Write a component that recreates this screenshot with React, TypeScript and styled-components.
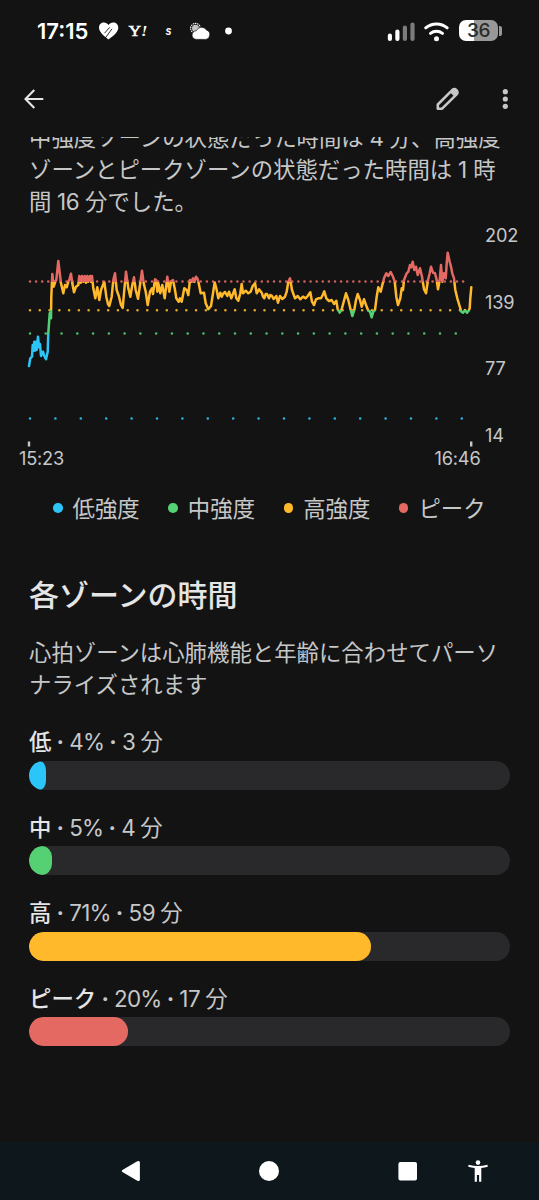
import React from "react";
import styled, { createGlobalStyle } from "styled-components";

const color = {
  bg: "#131314",
  text: "#c6c7c7",
  strong: "#e5e5e5",
  track: "#29292b",
  low: "#2cc5f8",
  mid: "#55d072",
  high: "#ffb92b",
  peak: "#e46962",
};

const GlobalStyle = createGlobalStyle`
  * { box-sizing: border-box; }
  body {
    margin: 0;
    background: ${color.bg};
    font-family: Inter, "Noto Sans CJK JP", sans-serif;
    overflow: hidden;
  }
  h2, p { margin: 0; }
`;

const Screen = styled.div`
  width: 539px;
  height: 1200px;
  display: flex;
  flex-direction: column;
  background: ${color.bg};
  color: ${color.text};
`;

const StatusBar = styled.header`
  height: 61px;
  flex: none;
  display: flex;
  align-items: center;
  justify-content: space-between;
  padding: 0 37px 0 37px;
  color: #fff;
`;

const StatusGroup = styled.div`
  display: flex;
  align-items: center;
`;

const Clock = styled.span`
  width: 61px;
  font-size: 22px;
  line-height: 28px;
  font-weight: 600;
  letter-spacing: 0;
  white-space: nowrap;
`;

const Battery = styled.div`
  display: flex;
  align-items: center;
  gap: 1px;
  margin-left: 9px;
`;

const BatteryBody = styled.div`
  width: 39px;
  height: 21px;
  border-radius: 7px;
  background: linear-gradient(90deg, #fff 38%, #989898 38%);
  color: #2b2b2b;
  font-size: 19px;
  line-height: 21px;
  font-weight: 500;
  letter-spacing: -0.5px;
  text-align: center;
`;

const BatteryTip = styled.div`
  width: 3px;
  height: 10px;
  border-radius: 0 2px 2px 0;
  background: #989898;
`;

const AppBar = styled.div`
  height: 76px;
  flex: none;
  display: flex;
  align-items: center;
  padding: 0 21px 0 22px;
`;

const IconButton = styled.button<{ $push?: boolean; $gap?: number }>`
  display: flex;
  padding: 0;
  border: 0;
  background: none;
  margin-left: ${(p) => (p.$push ? "auto" : `${p.$gap ?? 0}px`)};
`;

const Content = styled.main`
  flex: 1;
  min-height: 0;
  overflow: hidden;
  display: flex;
  flex-direction: column;
`;

const Summary = styled.p`
  margin: -15.4px 29px 0;
  font-size: 22.4px;
  line-height: 32.4px;
  white-space: nowrap;
  word-spacing: -0.6px;
`;

const Num = styled.span<{ $track?: number }>`
  letter-spacing: ${(p) => p.$track ?? 0}px;
`;

const ChartCard = styled.section`
  display: grid;
  grid-template-columns: 485px 54px;
  height: 251px;
  margin-top: 4.9px;
  flex: none;
`;

const Plot = styled.div`
  display: flex;
  flex-direction: column;
`;

const AxisLabel = styled.span`
  font-size: 18.2px;
  line-height: 22px;
  letter-spacing: -0.2px;
`;

const TimeAxis = styled.div`
  display: flex;
  justify-content: space-between;
  padding: 0 4.5px 0 19px;
`;

const ValueAxis = styled.div`
  height: 222px;
  padding-top: 0.4px;
  display: flex;
  flex-direction: column;
  justify-content: space-between;
`;

const Legend = styled.div`
  display: flex;
  height: 32px;
  align-items: center;
  padding-left: 53px;
  gap: 28.5px;
  flex: none;
  margin-top: 18px;
`;

const LegendItem = styled.div`
  display: flex;
  align-items: center;
  gap: 10px;
  font-size: 22.4px;
  line-height: 32px;
`;

const Dot = styled.span<{ $color: string }>`
  width: 9.6px;
  height: 9.6px;
  border-radius: 50%;
  background: ${(p) => p.$color};
  margin-top: -2px;
`;

const Title = styled.h2`
  margin: 48.5px 29px 0;
  font-size: 30px;
  line-height: 44px;
  font-weight: 500;
  color: ${color.strong};
`;

const Description = styled.p`
  margin: 20px 29px 0;
  font-size: 22.4px;
  line-height: 32.2px;
`;

const Zones = styled.div`
  margin: 24.4px 29px 0;
  display: flex;
  flex-direction: column;
  gap: 22px;
`;

const Zone = styled.div`
  height: 63.5px;
  display: flex;
  flex-direction: column;
  justify-content: space-between;
`;

const ZoneLabel = styled.div`
  font-size: 22.4px;
  line-height: 32px;
  white-space: pre;
  word-spacing: -1.1px;
`;

const ZoneName = styled.span`
  color: ${color.strong};
  font-weight: 500;
`;

const Separator = styled.span`
  font-weight: 700;
`;

const Track = styled.div`
  height: 28.6px;
  border-radius: 14.3px;
  background: ${color.track};
  overflow: hidden;
`;

const Fill = styled.div<{ $color: string; $width: number; $radius: string }>`
  height: 100%;
  width: ${(p) => p.$width}px;
  background: ${(p) => p.$color};
  border-radius: ${(p) => p.$radius};
`;

const NavBar = styled.nav`
  height: 58px;
  flex: none;
  display: flex;
  align-items: center;
  padding: 0 50px 0 120px;
  background: #0d171c;
`;

const NavItem = styled.div<{ $gap?: number }>`
  display: flex;
  margin-left: ${(p) => p.$gap ?? 0}px;
`;

/* Heart rate samples: [x, y] in thirds of a pixel, relative to the plot corner. */
const samples =
  "42,408 46,385 51,380 53,345 56,362 58,335 60,362 63,335 65,360 69,320 72,352 75,342 78,378 84,365 88,378 93,388 98,365 100,310 104,250 108,265 109,200 112,132 116,170 121,155 124,150 130,93 138,160 145,190 150,165 155,172 160,155 163,150 168,131 172,160 177,187 183,170 190,165 193,138 197,158 201,138 205,155 209,138 213,158 217,138 220,155 225,138 228,155 231,138 235,175 241,205 247,172 253,210 258,180 268,155 274,200 279,222 283,228 290,200 295,150 300,130 305,180 312,200 318,225 323,234 328,180 333,125 340,175 346,200 352,165 357,142 362,180 369,206 375,165 381,122 386,160 392,185 398,225 405,185 411,175 414,192 420,148 424,150 427,185 430,160 436,190 442,165 449,205 457,140 463,185 468,155 474,150 480,180 484,205 491,215 495,205 500,215 508,175 515,180 520,195 525,150 530,155 534,145 538,155 543,140 548,148 551,160 557,190 567,188 572,220 580,238 588,228 594,190 599,157 604,175 610,205 616,188 620,200 624,192 630,186 637,198 642,185 649,205 659,178 664,205 670,212 676,190 680,162 684,190 692,182 700,190 707,185 713,168 720,160 725,190 732,178 740,188 744,200 748,205 752,192 756,192 762,205 766,195 770,197 776,207 784,198 789,218 795,198 802,207 810,200 815,185 820,155 825,145 831,180 840,205 848,198 856,208 864,200 872,205 878,198 886,187 891,215 897,225 903,208 910,205 918,205 923,195 928,184 934,205 942,213 950,210 957,222 964,212 968,238 974,248 980,238 986,215 993,190 1000,210 1007,240 1012,258 1018,240 1023,210 1028,192 1035,210 1040,230 1047,208 1053,225 1060,242 1065,245 1070,262 1075,245 1080,240 1085,200 1090,172 1097,185 1102,165 1107,145 1114,130 1120,138 1127,126 1134,140 1139,155 1144,200 1149,225 1156,205 1160,175 1164,180 1167,150 1175,130 1180,125 1185,105 1189,112 1193,95 1198,120 1203,110 1208,135 1215,115 1221,140 1227,178 1233,190 1239,150 1244,130 1248,110 1254,128 1260,130 1265,150 1269,178 1274,150 1278,105 1282,155 1287,130 1292,145 1295,100 1298,68 1304,95 1308,110 1312,130 1317,145 1321,180 1327,205 1333,225 1339,245 1344,248 1350,240 1356,248 1361,242 1364,235 1366,205 1369,172";

const points = samples
  .split(" ")
  .map((pair) => {
    const [x, y] = pair.split(",").map(Number);
    return `${(15 + x / 3).toFixed(1)},${(y / 3 + 6).toFixed(1)}`;
  })
  .join(" ");

const guides = [
  { y: 57.5, step: 6.1, end: 467, color: color.peak },
  { y: 86.2, step: 9.77, end: 465, color: color.high },
  { y: 109.5, step: 15.77, end: 457, color: color.mid },
  { y: 194.5, step: 25.4, end: 463, color: color.low },
];

const HeartRateChart = () => (
  <svg width="485" height="223" viewBox="0 0 485 223">
    <defs>
      <linearGradient id="zones" gradientUnits="userSpaceOnUse" x1="0" y1="0" x2="0" y2="200">
        <stop offset="0.29" stopColor={color.peak} />
        <stop offset="0.29" stopColor={color.high} />
        <stop offset="0.431" stopColor={color.high} />
        <stop offset="0.431" stopColor={color.mid} />
        <stop offset="0.5475" stopColor={color.mid} />
        <stop offset="0.5475" stopColor={color.low} />
      </linearGradient>
    </defs>
    {guides.map((g) => (
      <line
        key={g.y}
        x1="30"
        x2={g.end}
        y1={g.y}
        y2={g.y}
        stroke={g.color}
        strokeWidth="2.6"
        strokeLinecap="round"
        strokeDasharray={`0 ${g.step}`}
        opacity="0.9"
      />
    ))}
    <polyline points={points} fill="none" stroke="url(#zones)" strokeWidth="2.5" strokeLinejoin="round" strokeLinecap="round" />
    <path d="M29 217.500v5M471.200 217.500v5" stroke="#c6c7c7" strokeWidth="2.400" />
  </svg>
);

const legend = [
  ["低強度", color.low],
  ["中強度", color.mid],
  ["高強度", color.high],
  ["ピーク", color.peak],
];

const zones = [
  { name: "低", pct: "4%", min: "3", color: color.low, width: 17.4, radius: "11px 6.400px 6.400px 11px / 14.3px 10px 10px 14.3px" },
  { name: "中", pct: "5%", min: "4", color: color.mid, width: 23.2, radius: "12.500px 10.500px 10.500px 12.500px / 14.3px 11px 11px 14.3px" },
  { name: "高", pct: "71%", min: "59", color: color.high, width: 342, radius: "14.3px" },
  { name: "ピーク", pct: "20%", min: "17", color: color.peak, width: 98.5, radius: "14.3px" },
];

const StatusIcons = () => (
  <svg width="140" height="28" viewBox="98 17 140 28" fill="#fff">
    <path d="M108.400 39.500C102.500 35 99 31.500 99 27.500C99 24.500 101.200 22.500 103.900 22.500C105.800 22.500 107.500 23.500 108.500 25C109.500 23.500 111.200 22.500 113.200 22.500C116.200 22.500 118.300 24.600 118.300 27.600C118.300 31.500 115 35 108.400 39.500Z" />
    <path d="M104.500 33.200L109.800 27.300M105.300 38L112 28.800" fill="none" stroke="#131314" strokeWidth="0.900" />
    <text transform="translate(128.500 36.300) scale(1.250 1)" fontFamily="Liberation Serif, serif" fontSize="14" fontWeight="400" stroke="#fff" strokeWidth="0.500">Y</text>
    <text transform="translate(141 36.300) scale(1.150 1)" fontFamily="Liberation Serif, serif" fontSize="14.500" fontWeight="700" fontStyle="italic">!</text>
    <text x="165.500" y="35" fontFamily="Liberation Sans, sans-serif" fontSize="12.500" fontWeight="700" fontStyle="italic" textLength="6" lengthAdjust="spacingAndGlyphs">s</text>
    <circle cx="195.500" cy="28.300" r="4.900" fill="none" stroke="#fff" strokeWidth="1.100" strokeDasharray="1.500 0.700" />
    <circle cx="195.500" cy="28.300" r="3.500" fill="#c4c4c4" />
    <path d="M196.500 39.400a4.300 4.300 0 0 1 -.3-8.600a5.900 5.900 0 0 1 10.300-.9a4.900 4.900 0 0 1-2 9.500z" stroke="#131314" strokeWidth="0.700" />
    <circle cx="228.500" cy="31" r="3.400" />
  </svg>
);

const SignalIcons = () => (
  <svg width="63" height="24" viewBox="387 18 63 24" fill="none" stroke="#fff" strokeLinecap="round">
    <g strokeWidth="4.200">
      <path d="M389.900 34.700v3.200M397.400 30.500v7.400" />
      <path d="M404.900 26.600v11.300M412.500 23.500v14.400" stroke="#7c7c7c" />
    </g>
    <path d="M425.700 26.900C432 21.600 441 21.600 447.200 26.900" strokeWidth="3" />
    <path d="M430.500 32.300C434 29.500 439 29.500 442.500 32.300" strokeWidth="3" />
    <circle cx="436.500" cy="37.700" r="2.500" fill="#fff" stroke="none" />
  </svg>
);

export default function App() {
  return (
    <Screen>
      <GlobalStyle />
      <StatusBar>
        <StatusGroup>
          <Clock>17:15</Clock>
          <StatusIcons />
        </StatusGroup>
        <StatusGroup>
          <SignalIcons />
          <Battery>
            <BatteryBody>36</BatteryBody>
            <BatteryTip />
          </Battery>
        </StatusGroup>
      </StatusBar>

      <AppBar>
        <IconButton aria-label="戻る">
          <svg width="24" height="24" viewBox="0 0 24 24" fill="none" stroke="#e5e5e5" strokeWidth="2.100">
            <path d="M21.300 12H4M12.300 3L3.500 12L12.300 21" />
          </svg>
        </IconButton>
        <IconButton aria-label="編集" $push>
          <svg width="26" height="26" viewBox="434 86 26 26">
            <path
              d="M437.800 108.700V104.500L452.200 90.100Q454.500 88.300 456.400 90.200Q458.400 92.300 456.600 94.300L442.100 108.700Z"
              fill="none" stroke="#c6c7c7" strokeWidth="2.600" strokeLinejoin="round"
            />
            <path d="M449.800 92L454.700 96.900L457.500 94L457.500 90.500L454.500 88.800Z" fill="#c6c7c7" />
          </svg>
        </IconButton>
        <IconButton aria-label="その他" $gap={32.5}>
          <svg width="26" height="26" viewBox="492 86 26 26" fill="#c6c7c7">
            <circle cx="505.300" cy="91.700" r="2.600" />
            <circle cx="505.300" cy="99" r="2.600" />
            <circle cx="505.300" cy="106.300" r="2.600" />
          </svg>
        </IconButton>
      </AppBar>

      <Content>
        <Summary>
          中強度ゾーンの状態だった時間は <Num $track={-1}>4</Num> 分、高強度
          <br />
          ゾーンとピークゾーンの状態だった時間は <Num $track={0.6}>1</Num> 時
          <br />間 <Num $track={-0.4}>16</Num> 分でした。
        </Summary>

        <ChartCard>
          <Plot>
            <HeartRateChart />
            <TimeAxis>
              <AxisLabel>15:23</AxisLabel>
              <AxisLabel>16:46</AxisLabel>
            </TimeAxis>
          </Plot>
          <ValueAxis>
            {["202", "139", "77", "14"].map((v) => (
              <AxisLabel key={v}>{v}</AxisLabel>
            ))}
          </ValueAxis>
        </ChartCard>

        <Legend>
          {legend.map(([name, c]) => (
            <LegendItem key={name}>
              <Dot $color={c} />
              {name}
            </LegendItem>
          ))}
        </Legend>

        <Title>各ゾーンの時間</Title>
        <Description>心拍ゾーンは心肺機能と年齢に合わせてパーソナライズされます</Description>

        <Zones>
          {zones.map((z) => (
            <Zone key={z.name}>
              <ZoneLabel>
                <ZoneName>{z.name}</ZoneName> <Separator>·</Separator> <Num $track={-0.8}>{z.pct}</Num>{" "}
                <Separator>·</Separator> <Num $track={-0.5}>{z.min}</Num> 分
              </ZoneLabel>
              <Track>
                <Fill $color={z.color} $width={z.width} $radius={z.radius} />
              </Track>
            </Zone>
          ))}
        </Zones>
      </Content>

      <NavBar>
        <NavItem>
          <svg width="21" height="22" viewBox="0 0 21 22" fill="#fff">
            <path d="M2.400 10L17.300 1.300Q19.900 0.300 19.900 2.500V19.500Q19.900 21.700 17.300 20.700L2.400 12Q1 11 2.400 10Z" />
          </svg>
        </NavItem>
        <NavItem $gap={118}>
          <svg width="20" height="22" viewBox="0 0 20 22" fill="#fff">
            <circle cx="10" cy="11" r="10" />
          </svg>
        </NavItem>
        <NavItem $gap={118}>
          <svg width="21" height="22" viewBox="0 0 21 22" fill="#fff">
            <rect x="1.400" y="2" width="18.600" height="18.400" rx="2" />
          </svg>
        </NavItem>
        <NavItem $gap={50}>
          <svg width="20" height="22" viewBox="0 0 20 22" fill="#fff">
            <circle cx="10" cy="2.600" r="2.300" />
            <path d="M0.600 4.700Q10 7.500 19.400 4.700L19.800 6.700Q16.500 7.600 13.300 8V21.700H11.100V15H8.900V21.700H6.700V8Q3.500 7.600 0.200 6.700Z" />
          </svg>
        </NavItem>
      </NavBar>
    </Screen>
  );
}
